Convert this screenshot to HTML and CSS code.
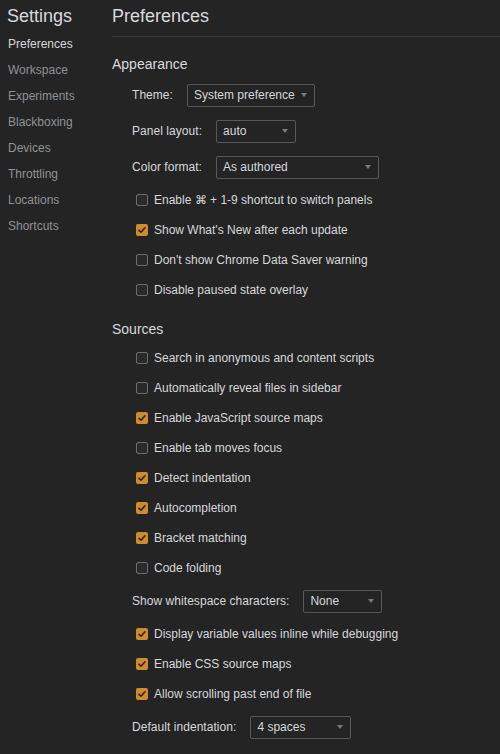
FILE: index.html
```html
<!DOCTYPE html>
<html>
<head>
<meta charset="utf-8">
<link rel="stylesheet" href="styles.css">
</head>
<body>
<div class="app">
  <nav class="sidebar">
    <div class="brand">Settings</div>
    <ul class="nav">
      <li class="nav-item active">Preferences</li>
      <li class="nav-item">Workspace</li>
      <li class="nav-item">Experiments</li>
      <li class="nav-item">Blackboxing</li>
      <li class="nav-item">Devices</li>
      <li class="nav-item">Throttling</li>
      <li class="nav-item">Locations</li>
      <li class="nav-item">Shortcuts</li>
    </ul>
  </nav>
  <main class="content">
    <header class="page-header"><h1 class="page-title">Preferences</h1></header>

    <section class="section sec-appearance">
      <h2 class="section-title">Appearance</h2>
      <div class="select-row"><span class="label">Theme:</span><span class="select w-theme"><span class="select-text">System preference</span><svg class="arrow" width="6" height="4" viewBox="0 0 6 4"><path d="M0 0h6L3 4z"/></svg></span></div>
      <div class="select-row"><span class="label">Panel layout:</span><span class="select w-panel"><span class="select-text">auto</span><svg class="arrow" width="6" height="4" viewBox="0 0 6 4"><path d="M0 0h6L3 4z"/></svg></span></div>
      <div class="select-row"><span class="label">Color format:</span><span class="select w-color"><span class="select-text">As authored</span><svg class="arrow" width="6" height="4" viewBox="0 0 6 4"><path d="M0 0h6L3 4z"/></svg></span></div>
      <label class="check-row"><span class="box"></span><span class="check-text">Enable ⌘ + 1-9 shortcut to switch panels</span></label>
      <label class="check-row"><span class="box on"><svg width="12" height="12" viewBox="0 0 12 12"><path d="M3 6.2l2 2L9 3.8" fill="none" stroke="#2a2219" stroke-width="1.6" stroke-linecap="round" stroke-linejoin="round"/></svg></span><span class="check-text">Show What's New after each update</span></label>
      <label class="check-row"><span class="box"></span><span class="check-text">Don't show Chrome Data Saver warning</span></label>
      <label class="check-row"><span class="box"></span><span class="check-text">Disable paused state overlay</span></label>
    </section>

    <section class="section sec-sources">
      <h2 class="section-title">Sources</h2>
      <div class="rows">
      <label class="check-row"><span class="box"></span><span class="check-text">Search in anonymous and content scripts</span></label>
      <label class="check-row"><span class="box"></span><span class="check-text">Automatically reveal files in sidebar</span></label>
      <label class="check-row"><span class="box on"><svg width="12" height="12" viewBox="0 0 12 12"><path d="M3 6.2l2 2L9 3.8" fill="none" stroke="#2a2219" stroke-width="1.6" stroke-linecap="round" stroke-linejoin="round"/></svg></span><span class="check-text">Enable JavaScript source maps</span></label>
      <label class="check-row"><span class="box"></span><span class="check-text">Enable tab moves focus</span></label>
      <label class="check-row"><span class="box on"><svg width="12" height="12" viewBox="0 0 12 12"><path d="M3 6.2l2 2L9 3.8" fill="none" stroke="#2a2219" stroke-width="1.6" stroke-linecap="round" stroke-linejoin="round"/></svg></span><span class="check-text">Detect indentation</span></label>
      <label class="check-row"><span class="box on"><svg width="12" height="12" viewBox="0 0 12 12"><path d="M3 6.2l2 2L9 3.8" fill="none" stroke="#2a2219" stroke-width="1.6" stroke-linecap="round" stroke-linejoin="round"/></svg></span><span class="check-text">Autocompletion</span></label>
      <label class="check-row"><span class="box on"><svg width="12" height="12" viewBox="0 0 12 12"><path d="M3 6.2l2 2L9 3.8" fill="none" stroke="#2a2219" stroke-width="1.6" stroke-linecap="round" stroke-linejoin="round"/></svg></span><span class="check-text">Bracket matching</span></label>
      <label class="check-row"><span class="box"></span><span class="check-text">Code folding</span></label>
      <div class="select-row"><span class="label">Show whitespace characters:</span><span class="select w-ws"><span class="select-text">None</span><svg class="arrow" width="6" height="4" viewBox="0 0 6 4"><path d="M0 0h6L3 4z"/></svg></span></div>
      <label class="check-row"><span class="box on"><svg width="12" height="12" viewBox="0 0 12 12"><path d="M3 6.2l2 2L9 3.8" fill="none" stroke="#2a2219" stroke-width="1.6" stroke-linecap="round" stroke-linejoin="round"/></svg></span><span class="check-text">Display variable values inline while debugging</span></label>
      <label class="check-row"><span class="box on"><svg width="12" height="12" viewBox="0 0 12 12"><path d="M3 6.2l2 2L9 3.8" fill="none" stroke="#2a2219" stroke-width="1.6" stroke-linecap="round" stroke-linejoin="round"/></svg></span><span class="check-text">Enable CSS source maps</span></label>
      <label class="check-row"><span class="box on"><svg width="12" height="12" viewBox="0 0 12 12"><path d="M3 6.2l2 2L9 3.8" fill="none" stroke="#2a2219" stroke-width="1.6" stroke-linecap="round" stroke-linejoin="round"/></svg></span><span class="check-text">Allow scrolling past end of file</span></label>
      <div class="select-row"><span class="label">Default indentation:</span><span class="select w-indent"><span class="select-text">4 spaces</span><svg class="arrow" width="6" height="4" viewBox="0 0 6 4"><path d="M0 0h6L3 4z"/></svg></span></div>
      </div>
    </section>
  </main>
</div>
</body>
</html>
```

FILE: styles.css
```css
* { box-sizing: border-box; }
html, body {
  margin: 0;
  padding: 0;
  background: #242424;
  height: 100%;
  overflow: hidden;
}
body {
  font-family: "Liberation Sans", Arial, sans-serif;
  font-size: 12px;
  color: #d6d8db;
}
.app {
  display: flex;
  height: 754px;
}
.sidebar {
  width: 112px;
  flex: none;
}
.brand {
  font-size: 18px;
  line-height: 22px;
  padding: 5px 0 0 7px;
  height: 31px;
  color: #d8dadd;
}
.nav {
  list-style: none;
  margin: 0;
  padding: 0;
}
.nav-item {
  height: 26px;
  line-height: 26px;
  padding-left: 8px;
  color: #8f9296;
}
.nav-item.active {
  color: #d6d8db;
}
.content {
  flex: 1;
  min-width: 0;
}
.page-header {
  height: 37px;
  border-bottom: 1px solid #383838;
  padding-top: 5px;
}
.page-title {
  margin: 0;
  font-size: 18px;
  line-height: 22px;
  font-weight: normal;
  color: #d8dadd;
}
.section-title {
  margin: 0;
  font-size: 14px;
  line-height: 20px;
  font-weight: normal;
  color: #d8dadd;
}
.sec-appearance { padding-top: 17px; }
.sec-appearance .section-title { margin-bottom: 3px; }
.sec-sources { padding-top: 14px; }
.sec-sources .section-title { margin-bottom: 4px; }
.select-row {
  height: 36px;
  display: flex;
  align-items: center;
  gap: 14px;
  padding-left: 20px;
}
.label { letter-spacing: 0.05px; }
.select {
  height: 23px;
  border: 1px solid #585858;
  border-radius: 2px;
  display: flex;
  align-items: center;
  justify-content: space-between;
  padding: 0 7px 0 6px;
  color: #d6d8db;
}
.arrow { fill: #7a7a7a; }
.w-theme { width: 128px; }
.w-panel { width: 80px; }
.w-color { width: 163px; }
.w-ws { width: 79px; }
.w-indent { width: 101px; }
.check-row {
  height: 30px;
  display: flex;
  align-items: center;
  padding-left: 24px;
  gap: 6px;
}
.box {
  width: 12px;
  height: 12px;
  border: 1px solid #6e6e6e;
  border-radius: 2px;
  background: #2a2a2a;
  flex: none;
  display: flex;
}
.box.on {
  border: none;
  background: #cf8b2d;
}
```
